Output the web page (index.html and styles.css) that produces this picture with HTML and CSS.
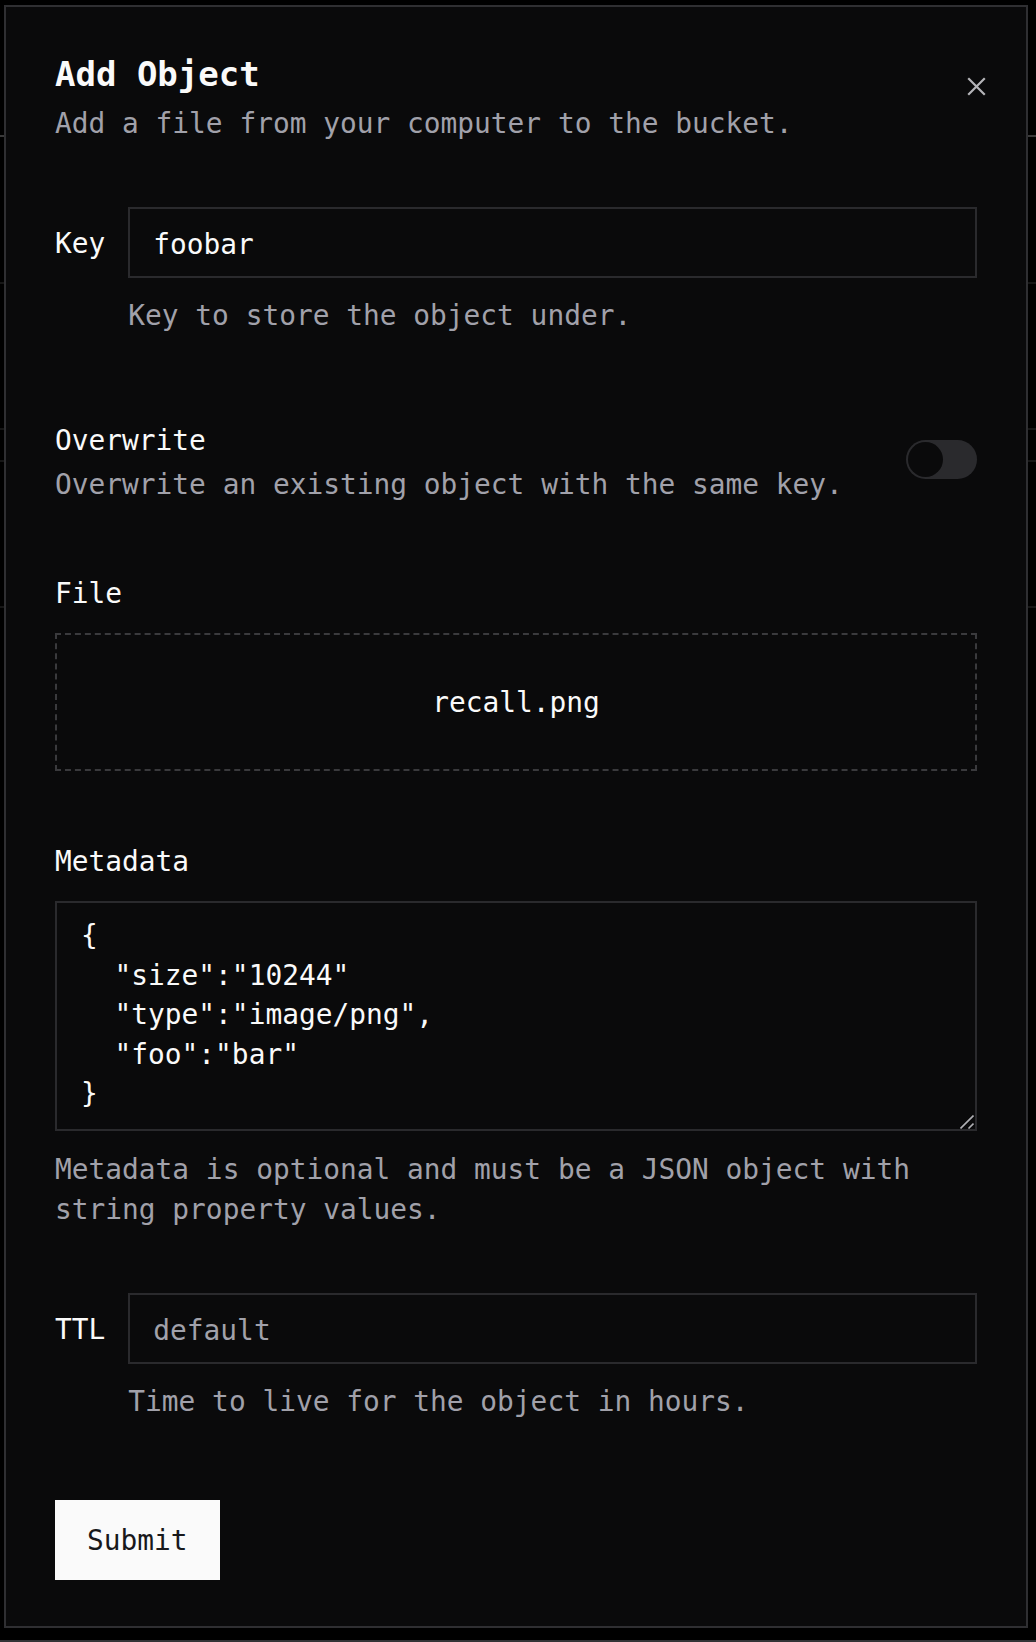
FILE: index.html
```html
<!DOCTYPE html>
<html lang="en">
<head>
<meta charset="utf-8">
<title>Add Object</title>
<link rel="stylesheet" href="styles.css">
</head>
<body>
<div class="page-behind">
  <div class="bg-line bright l136"></div>
  <div class="bg-line l283"></div>
  <div class="bg-line l429"></div>
  <div class="bg-line l461"></div>
  <div class="bg-line l607"></div>
  <div class="bg-line bottom l1640"></div>
</div>

<div class="dialog" role="dialog">
  <button class="close" aria-label="Close">
    <svg width="19" height="19" viewBox="0 0 19 19" fill="none" stroke="currentColor" stroke-width="2.2" stroke-linecap="square"><path d="M2 2L17 17M17 2L2 17"/></svg>
  </button>

  <header class="header">
    <h2 class="title">Add Object</h2>
    <p class="muted desc">Add a file from your computer to the bucket.</p>
  </header>

  <div class="inline-field key-field">
    <label class="label">Key</label>
    <input class="input" type="text" value="foobar">
    <p class="muted helper">Key to store the object under.</p>
  </div>

  <div class="switch-row">
    <div class="switch-text">
      <div class="label">Overwrite</div>
      <p class="muted switch-desc">Overwrite an existing object with the same key.</p>
    </div>
    <div class="switch"><span class="knob"></span></div>
  </div>

  <div class="label block-label file-label">File</div>
  <div class="dropzone">recall.png</div>

  <div class="label block-label meta-label">Metadata</div>
  <div class="textarea-wrap">
    <textarea class="textarea">{
  "size":"10244"
  "type":"image/png",
  "foo":"bar"
}</textarea>
    <svg class="grip" width="14" height="14" viewBox="0 0 14 14" fill="none" stroke="#b0b0b4" stroke-width="1.6"><path d="M0.5 13.5L13.5 0.5M8.5 13.5L13.5 8.5"/></svg>
  </div>
  <p class="muted meta-help">Metadata is optional and must be a JSON object with string property values.</p>

  <div class="inline-field ttl-field">
    <label class="label">TTL</label>
    <input class="input" type="text" placeholder="default">
    <p class="muted helper">Time to live for the object in hours.</p>
  </div>

  <button class="submit">Submit</button>
</div>
</body>
</html>
```

FILE: styles.css
```css
* { box-sizing: border-box; }

html, body {
  margin: 0;
  padding: 0;
  background: #000;
  width: 1036px;
  height: 1642px;
  overflow: hidden;
  font-family: "DejaVu Sans Mono", "Liberation Mono", monospace;
  color: #fafafa;
  font-size: 27.85px;
  line-height: 40px;
}

.page-behind {
  position: absolute;
  inset: 0;
}

.bg-line {
  position: absolute;
  left: 0;
  right: 0;
  height: 2px;
  background: #161616;
}
.bg-line.bright { background: #3a3a3a; }
.bg-line.bottom { background: #333336; }
.l136 { top: 135px; }
.l283 { top: 282px; }
.l429 { top: 428px; }
.l461 { top: 460px; }
.l607 { top: 606px; }
.l1640 { top: 1640px; }

.dialog {
  position: absolute;
  left: 4px;
  top: 5px;
  width: 1024px;
  height: 1623px;
  background: #0a0a0b;
  border: 2px solid #2f2f32;
  padding: 43px 49px 46px;
  display: flex;
  flex-direction: column;
  align-items: stretch;
}

.close {
  position: absolute;
  top: 70px;
  right: 40px;
  width: 19px;
  height: 19px;
  padding: 0;
  border: 0;
  background: none;
  color: #b4b4b8;
  display: flex;
}

.header { display: flex; flex-direction: column; }

.title {
  margin: 0;
  font-size: 34px;
  line-height: 48px;
  font-weight: 700;
  color: #fafafa;
}

.muted { color: #a1a1aa; margin: 0; }

.desc { margin-top: 6px; }

.label {
  color: #fafafa;
  font-weight: 500;
}

.inline-field {
  display: grid;
  grid-template-columns: auto 1fr;
  column-gap: 23px;
  align-items: center;
}
.inline-field .label { padding-top: 3px; }
.inline-field .helper {
  grid-column: 2;
  margin-top: 18px;
}
.key-field { margin-top: 63px; }
.ttl-field { margin-top: 63px; }

.input {
  height: 71px;
  border: 2px solid #2a2a2d;
  background: transparent;
  color: #fafafa;
  font: inherit;
  padding: 3px 23px 0;
  outline: none;
  width: 100%;
}
.input::placeholder { color: #a1a1aa; opacity: 1; }

.switch-row {
  margin-top: 84px;
  display: flex;
  align-items: center;
  justify-content: space-between;
}
.switch-text { padding-top: 1px; }
.switch-desc { margin-top: 4px; }

.switch {
  width: 71px;
  height: 39px;
  border-radius: 20px;
  background: #2a2a2d;
  padding: 2px;
  display: flex;
  align-items: center;
  margin-bottom: 7px;
}
.knob {
  width: 35px;
  height: 35px;
  border-radius: 50%;
  background: #0a0a0b;
}

.block-label { display: block; }
.file-label { margin-top: 69px; }
.meta-label { margin-top: 71px; }

.dropzone {
  margin-top: 19px;
  height: 138px;
  border: 2px dashed #3a3a3d;
  display: flex;
  align-items: center;
  justify-content: center;
  color: #fafafa;
  padding-top: 2px;
}

.textarea-wrap {
  position: relative;
  margin-top: 19px;
  height: 230px;
}

.textarea {
  display: block;
  height: 230px;
  width: 100%;
  border: 2px solid #2a2a2d;
  background: transparent;
  color: #fafafa;
  font: inherit;
  line-height: 39.5px;
  padding: 13px 24px;
  resize: none;
  outline: none;
  overflow: hidden;
}

.grip {
  position: absolute;
  right: 3px;
  bottom: 2px;
}

.meta-help { margin-top: 19px; }

.submit {
  margin-top: 78px;
  align-self: flex-start;
  height: 80px;
  padding: 2px 32px 0;
  border: 0;
  background: #fafafa;
  color: #18181b;
  font: inherit;
  font-weight: 500;
}
```
